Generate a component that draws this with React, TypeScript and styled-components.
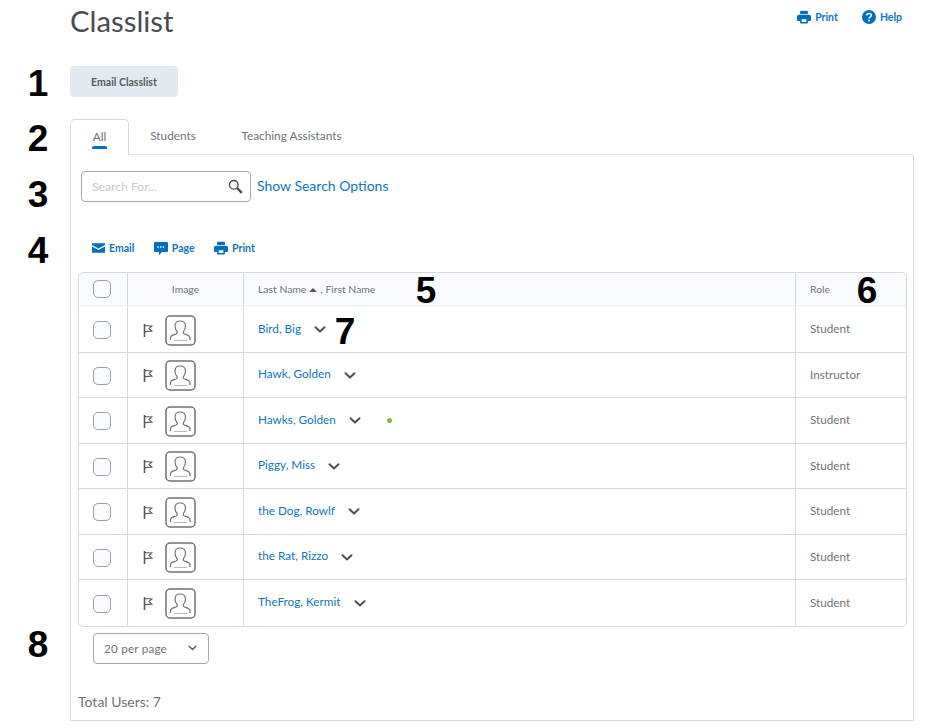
import React from 'react';
import styled, { createGlobalStyle } from 'styled-components';

const GlobalStyle = createGlobalStyle`
  html, body { margin: 0; padding: 0; background: #fff; }
  body { font-family: Lato, "Liberation Sans", sans-serif; color: #494c4e; }
  * { box-sizing: border-box; }
`;

const Page = styled.div`
  position: relative;
  width: 936px;
  height: 728px;
  overflow: hidden;
  padding: 0 22px 0 70px;
`;

const Header = styled.header`
  display: flex;
  justify-content: space-between;
  align-items: flex-start;
  height: 66px;
`;

const Title = styled.h1`
  margin: 0;
  font-size: 29.3px;
  line-height: 42px;
  font-weight: 400;
  color: #494c4e;
`;

const TopLinks = styled.div`
  display: flex;
  gap: 24px;
  padding: 9px 12px 0 0;
`;

const LinkButton = styled.a`
  display: inline-flex;
  align-items: center;
  gap: 4px;
  font-size: 10.5px;
  font-weight: 700;
  line-height: 16px;
  color: #0f75bd;
`;

const PrimaryButton = styled.button`
  display: block;
  width: 108px;
  height: 31px;
  padding: 0;
  border: 0;
  border-radius: 4px;
  background: #e3e9f1;
  color: #565a5c;
  font: 700 10.5px Lato, sans-serif;
`;

const Tabs = styled.nav`
  display: flex;
  height: 36px;
  margin-top: 22px;
`;

const Tab = styled.div<{ $active?: boolean; $width: number }>`
  position: relative;
  width: ${p => p.$width}px;
  height: ${p => (p.$active ? 36 : 35)}px;
  padding-top: 9px;
  text-align: center;
  font-size: 11.8px;
  line-height: 16px;
  color: #6e7376;
  background: #fff;
  z-index: ${p => (p.$active ? 1 : 0)};
  border: ${p => (p.$active ? '1px solid #d3d9e3' : '0')};
  border-bottom: 0;
  border-radius: 5px 5px 0 0;
  ${p =>
    p.$active &&
    `&::after {
      content: '';
      position: absolute;
      left: 21px;
      top: 26px;
      width: 15px;
      height: 3px;
      border-radius: 2px 2px 0 0;
      background: #006fbf;
    }`}
`;

const Panel = styled.section`
  width: 844px;
  height: 567px;
  margin-top: -1px;
  padding: 16px 8px 0 7px;
  border: 1px solid #d3d9e3;
  border-top-color: #e6eaf0;
`;

const SearchRow = styled.div`
  display: flex;
  align-items: center;
  gap: 6px;
  height: 31px;
  margin-left: 3px;
`;

const SearchBox = styled.div`
  display: flex;
  align-items: center;
  justify-content: space-between;
  width: 170px;
  height: 31px;
  padding: 0 7px 0 10px;
  border: 1px solid #a4a8ad;
  border-radius: 4px;
  font-size: 12.2px;
  color: #c5cbd3;
`;

const SearchLink = styled.a`
  padding-bottom: 2px;
  font-size: 14px;
  color: #0f75bd;
`;

const ActionRow = styled.div`
  display: flex;
  align-items: center;
  gap: 19.5px;
  height: 16px;
  margin: 38px 0 16px 14px;
`;

const Table = styled.table`
  width: 829px;
  border-collapse: separate;
  border-spacing: 0;
  table-layout: fixed;
  border: 1px solid #d3d9e3;
  border-radius: 5px;
`;

const HeadCell = styled.th<{ $center?: boolean; $width?: number }>`
  width: ${p => (p.$width ? `${p.$width}px` : 'auto')};
  height: 34px;
  padding: 0 0 0 14px;
  background: #f9fbff;
  border-bottom: 2px solid #f0f3f8;
  border-right: 1px solid #d3d9e3;
  font-size: 10.4px;
  font-weight: 400;
  color: #6e7376;
  text-align: left;
  ${p => p.$center && 'text-align: center; padding: 0;'}
  &:first-child { border-radius: 5px 0 0 0; }
  &:last-child { border-right: 0; border-radius: 0 5px 0 0; }
`;

const Row = styled.tr`
  height: 45.5px;
  &:last-child td { border-bottom: 0; }
`;

const Cell = styled.td`
  padding: 0 0 0 14px;
  border-bottom: 1px solid #d3d9e3;
  border-right: 1px solid #d3d9e3;
  font-size: 11.7px;
  color: #6e7376;
  &:last-child { border-right: 0; }
`;

const RaisedCell = styled(Cell)`
  padding-top: 2px;
`;

const TextCell = styled(Cell)`
  padding-bottom: 2px;
`;

const Check = styled.span`
  display: block;
  width: 18px;
  height: 18px;
  border: 1px solid #9ca1a6;
  border-radius: 5px;
  background: #f9fbff;
`;

const ImageWrap = styled.div`
  display: flex;
  align-items: center;
  gap: 12px;
  padding-left: 1px;
`;

const NameWrap = styled.div`
  display: flex;
  align-items: center;
  gap: 13px;
`;

const NameLink = styled.a`
  font-size: 11.75px;
  color: #0f75bd;
`;

const ChevronSlot = styled.span`
  display: flex;
  margin-top: 3px;
`;

const OnlineDot = styled.span`
  width: 5px;
  height: 5px;
  margin: 3px 0 0 13px;
  border-radius: 50%;
  background: #8ab84a;
`;

const SortArrow = styled.span`
  display: inline-block;
  margin: 0 3px 1px 3px;
  border-left: 4px solid transparent;
  border-right: 4px solid transparent;
  border-bottom: 4px solid #565a5c;
`;

const PageSelect = styled.div`
  display: flex;
  align-items: center;
  justify-content: space-between;
  width: 116px;
  height: 31px;
  margin: 6px 0 0 15px;
  padding: 0 11px 0 10px;
  border: 1px solid #a4a8ad;
  border-radius: 4px;
  font-size: 11.7px;
  letter-spacing: 0.2px;
  color: #6e7376;
`;

const Total = styled.div`
  margin-top: 29px;
  font-size: 14px;
  line-height: 18px;
  color: #6e7376;
`;

const Marker = styled.span<{ $x: number; $y: number }>`
  position: absolute;
  left: ${p => p.$x}px;
  top: ${p => p.$y}px;
  transform: translate(-50%, -50%);
  font: 700 37px/1 "Liberation Sans", Arial, sans-serif;
  color: #000;
  z-index: 2;
`;

const BLUE = '#006fbf';

const PrintIcon = () => (
  <svg width="14" height="14" viewBox="0 0 18 18" fill={BLUE}>
    <path d="M5 1h8a1 1 0 0 1 1 1v3H4V2a1 1 0 0 1 1-1z" />
    <path fillRule="evenodd" d="M2.500 6h13A2.500 2.500 0 0 1 18 8.500V13a1 1 0 0 1-1 1h-3v2.500a1 1 0 0 1-1 1H5a1 1 0 0 1-1-1V14H1a1 1 0 0 1-1-1V8.500A2.500 2.500 0 0 1 2.500 6zM6 12v3.500h6V12z" />
  </svg>
);

const HelpIcon = () => (
  <svg width="14" height="14" viewBox="0 0 14 14">
    <circle cx="7" cy="7" r="7" fill={BLUE} />
    <path d="M4.700 5.400C4.800 4.100 5.800 3.400 7 3.400c1.300 0 2.300.8 2.300 1.900 0 1.700-2.300 1.700-2.300 3.200" fill="none" stroke="#fff" strokeWidth="1.500" />
    <circle cx="7" cy="10.600" r="1" fill="#fff" />
  </svg>
);

const MailIcon = () => (
  <svg width="13" height="10" viewBox="0 0 14 10" fill={BLUE}>
    <path d="M0 0h14v1.800L7 5.600 0 1.800z" />
    <path d="M0 3.400l7 3.800 7-3.800V10H0z" />
  </svg>
);

const PageIcon = () => (
  <svg width="14" height="13" viewBox="0 0 14 13">
    <path fill={BLUE} d="M1 0h12a1 1 0 0 1 1 1v8a1 1 0 0 1-1 1H8l-3 3v-3H1a1 1 0 0 1-1-1V1a1 1 0 0 1 1-1z" />
    <path stroke="#fff" strokeWidth="1.400" strokeDasharray="1.400 1.300" d="M3.300 5h7.600" />
  </svg>
);

const SearchIcon = () => (
  <svg width="15" height="15" viewBox="0 0 15 15" fill="none" stroke="#494c4e">
    <circle cx="5.800" cy="5.800" r="4.300" strokeWidth="1.400" />
    <path d="M9 9l4.800 4.800" strokeWidth="2.400" />
  </svg>
);

const FlagIcon = () => (
  <svg width="10" height="13" viewBox="0 0 10 13" fill="none" stroke="#565a5c" strokeWidth="1.100">
    <path d="M1.500 0v13" strokeWidth="1.600" />
    <path d="M1.500 1.200c2 1.200 3 .2 7.300 .8L6 4.500l2.800 2.700c-3 0-5 .4-7.300 .4" />
  </svg>
);

const UserImage = () => (
  <svg width="31" height="31" viewBox="0 0 31 31" fill="none" stroke="#6e7376">
    <rect x="1" y="1" width="29" height="29" rx="4" strokeWidth="1.500" />
    <path
      strokeWidth="1.200"
      d="M5.500 25v-2.500c0-2 2.500-2.500 5.500-3.500 1.300-.5 1.500-1.500 1-2.500-1.300-1.500-2-3.500-2-5.500 0-3.300 2-5 5-5s5.500 1.700 5.500 5c0 2-.8 4-2 5.500-.5 1-.3 2 1 2.500 3 1 5.500 1.500 5.500 3.500V25"
    />
    <path strokeWidth="1" stroke="#b5b9bd" d="M9 25.500h13" />
  </svg>
);

const Chevron = ({ small }: { small?: boolean }) => (
  <svg width={small ? 9 : 12} height={small ? 6 : 7} viewBox="0 0 12 7" fill="none" stroke={small ? '#565a5c' : '#494c4e'} strokeWidth="1.900" strokeLinecap="round" strokeLinejoin="round">
    <path d="M1.500 1.200L6 5.500l4.500-4.300" />
  </svg>
);

const STUDENTS = [
  { name: 'Bird, Big', role: 'Student' },
  { name: 'Hawk, Golden', role: 'Instructor' },
  { name: 'Hawks, Golden', role: 'Student', online: true },
  { name: 'Piggy, Miss', role: 'Student' },
  { name: 'the Dog, Rowlf', role: 'Student' },
  { name: 'the Rat, Rizzo', role: 'Student' },
  { name: 'TheFrog, Kermit', role: 'Student' },
];

const MARKERS = [
  { label: '1', x: 38, y: 83 },
  { label: '2', x: 38, y: 138 },
  { label: '3', x: 38, y: 194 },
  { label: '4', x: 38, y: 250 },
  { label: '5', x: 426, y: 290 },
  { label: '6', x: 867, y: 290 },
  { label: '7', x: 345, y: 331 },
  { label: '8', x: 38, y: 644 },
];

export default function App() {
  return (
    <Page>
      <GlobalStyle />
      <Header>
        <Title>Classlist</Title>
        <TopLinks>
          <LinkButton><PrintIcon />Print</LinkButton>
          <LinkButton><HelpIcon />Help</LinkButton>
        </TopLinks>
      </Header>

      <PrimaryButton>Email Classlist</PrimaryButton>

      <Tabs>
        <Tab $active $width={59}>All</Tab>
        <Tab $width={88}>Students</Tab>
        <Tab $width={149}>Teaching Assistants</Tab>
      </Tabs>

      <Panel>
        <SearchRow>
          <SearchBox>
            Search For...
            <SearchIcon />
          </SearchBox>
          <SearchLink>Show Search Options</SearchLink>
        </SearchRow>

        <ActionRow>
          <LinkButton><MailIcon />Email</LinkButton>
          <LinkButton><PageIcon />Page</LinkButton>
          <LinkButton><PrintIcon />Print</LinkButton>
        </ActionRow>

        <Table>
          <thead>
            <tr>
              <HeadCell $width={49}><Check /></HeadCell>
              <HeadCell $center $width={116}>Image</HeadCell>
              <HeadCell>Last Name<SortArrow />, First Name</HeadCell>
              <HeadCell $width={110}>Role</HeadCell>
            </tr>
          </thead>
          <tbody>
            {STUDENTS.map(s => (
              <Row key={s.name}>
                <RaisedCell><Check /></RaisedCell>
                <RaisedCell>
                  <ImageWrap>
                    <FlagIcon />
                    <UserImage />
                  </ImageWrap>
                </RaisedCell>
                <TextCell>
                  <NameWrap>
                    <NameLink>{s.name}</NameLink>
                    <ChevronSlot><Chevron /></ChevronSlot>
                    {s.online && <OnlineDot />}
                  </NameWrap>
                </TextCell>
                <TextCell>{s.role}</TextCell>
              </Row>
            ))}
          </tbody>
        </Table>

        <PageSelect>
          20 per page
          <Chevron small />
        </PageSelect>

        <Total>Total Users: 7</Total>
      </Panel>

      {MARKERS.map(m => (
        <Marker key={m.label} $x={m.x} $y={m.y}>{m.label}</Marker>
      ))}
    </Page>
  );
}
